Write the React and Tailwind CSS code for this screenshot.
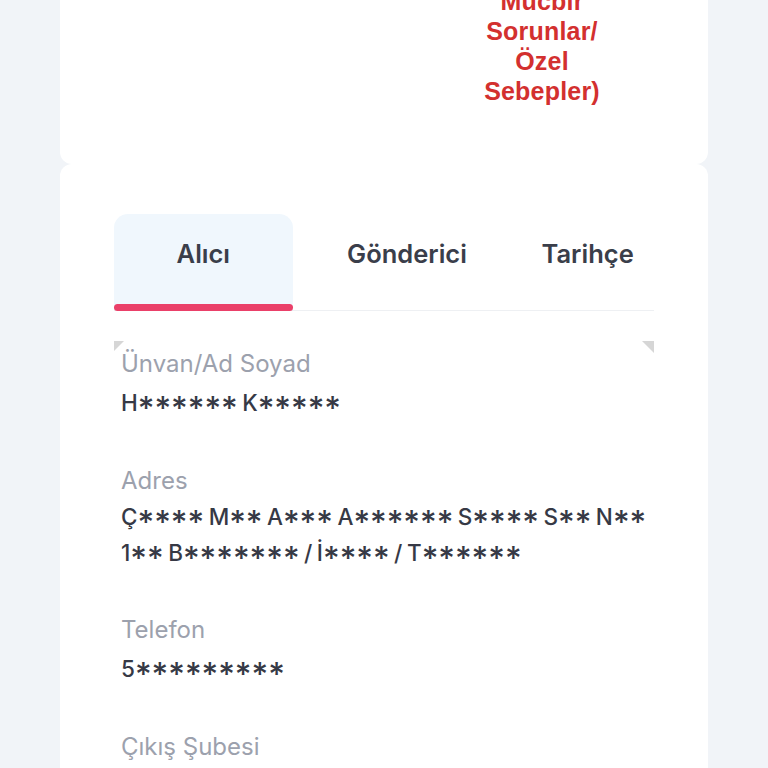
const fields = [
  { label: "Ünvan/Ad Soyad", lines: ["H****** K*****"] },
  { label: "Adres", lines: ["Ç**** M** A*** A****** S**** S** N**", "1** B******* / İ**** / T******"], tight: true },
  { label: "Telefon", lines: ["5*********"] },
  { label: "Çıkış Şubesi", lines: [] },
];

const tabs = [
  { name: "Alıcı", width: "w-[179px]", active: true },
  { name: "Gönderici", width: "w-[229px]" },
  { name: "Tarihçe", width: "w-[133px]" },
];

// masked values: asterisk runs drawn bigger and dropped to the middle of the caps, like the app's font
function Masked({ text }) {
  const parts = text.split(/(\*+)/);
  return parts.map((p, i) =>
    p.startsWith("*") ? (
      <span key={i} className="relative top-[9px] text-[32px] leading-[0]">
        {p}
      </span>
    ) : (
      <span key={i}>{p}</span>
    )
  );
}

export default function App() {
  return (
    <div className="h-[768px] overflow-hidden bg-[#f1f4f8] px-[60px] font-['Inter',sans-serif]">
      {/* Top card (reason text) */}
      <div className="flex h-[164px] justify-end overflow-hidden rounded-b-[12px] bg-white pr-[91px]">
        <div className="-mt-[14px] w-[150px] text-center font-['Liberation_Sans',Arial,sans-serif] text-[25px] font-bold leading-[30px] tracking-[0.2px] text-[#d3302f]">
          Mücbir
          <br />
          Sorunlar/
          <br />
          Özel
          <br />
          Sebepler)
        </div>
      </div>

      {/* Detail card */}
      <div className="h-[604px] rounded-t-[12px] bg-white px-[54px] pt-[50px]">
        {/* Tabs */}
        <div className="flex border-b border-[#eef0f3]">
          {tabs.map((t) => (
            <div
              key={t.name}
              className={`relative h-[96px] ${t.width} pt-[24px] text-center text-[25.5px] font-semibold leading-[32px] text-[#3a3e4a] ${
                t.active ? "rounded-t-[14px] bg-[#f0f7fd]" : ""
              }`}
            >
              {t.name}
              {t.active && (
                <div className="absolute -bottom-px left-0 h-[7px] w-full rounded-full bg-[#ea4069]" />
              )}
            </div>
          ))}
        </div>

        {/* Fields */}
        <div className="relative mt-[30px] pl-[7px] pr-[4px] pt-[7px]">
          <div className="absolute left-0 top-0 h-0 w-0 border-r-[10px] border-t-[10px] border-r-transparent border-t-[#d6d6d6]" />
          <div className="absolute right-0 top-0 h-0 w-0 border-l-[12px] border-t-[12px] border-l-transparent border-t-[#d6d6d6]" />
          <div className="flex flex-col">
            {fields.map((f) => (
              <div key={f.label} className={`flex flex-col ${f.tight ? "mb-[43px] gap-[2px]" : "mb-[44px] gap-[5px]"}`}>
                <div className="text-[24px] leading-[32px] text-[#9ca1ad]">{f.label}</div>
                {f.lines.length > 0 && (
                  <div className="text-[22.5px] font-medium leading-[36px] text-[#363945] [word-spacing:-1.5px]">
                    {f.lines.map((l) => (
                      <div key={l} className="whitespace-nowrap">
                        <Masked text={l} />
                      </div>
                    ))}
                  </div>
                )}
              </div>
            ))}
          </div>
        </div>
      </div>
    </div>
  );
}
